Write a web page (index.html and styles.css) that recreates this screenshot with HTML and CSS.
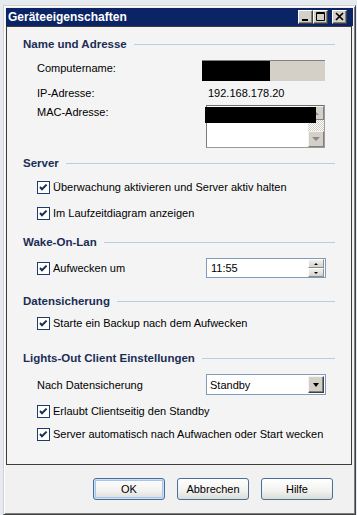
FILE: index.html
```html
<!DOCTYPE html>
<html lang="de">
<head>
    <meta charset="UTF-8">
    <meta name="viewport" content="width=device-width, initial-scale=1.0">
    <title>Geräteeigenschaften</title>
    <link rel="stylesheet" href="styles.css">
</head>
<body>
    <div class="window">
        <div class="titlebar">
            <span class="title">Geräteeigenschaften</span>
            <div class="caption">
                <span class="cap-btn"><svg width="13" height="12" viewBox="0 0 13 12"><rect x="3" y="8" width="6" height="2" fill="#000"/></svg></span>
                <span class="cap-btn"><svg width="13" height="12" viewBox="0 0 13 12"><path d="M2.5 1.5h8v8h-8z" fill="none" stroke="#000"/><rect x="2" y="2" width="9" height="1" fill="#000"/></svg></span>
                <span class="cap-btn cap-close"><svg width="13" height="12" viewBox="0 0 13 12"><path d="M3 2l7 7M10 2l-7 7" stroke="#000" stroke-width="1.7"/></svg></span>
            </div>
        </div>

        <div class="panel">
            <div class="heading mt-9">Name und Adresse</div>
            <div class="row row-name">
                <span class="label">Computername:</span>
                <div class="readonly"><span class="redact"></span></div>
            </div>
            <div class="row row-ip mt-5">
                <span class="label">IP-Adresse:</span>
                <span class="value">192.168.178.20</span>
            </div>
            <div class="row row-mac mt-5">
                <span class="label">MAC-Adresse:</span>
                <div class="listbox">
                    <div class="scrollbar">
                        <span class="sb-btn sb-up"></span>
                        <span class="sb-track"></span>
                        <span class="sb-btn sb-down"></span>
                    </div>
                    <span class="redact redact-mac"></span>
                </div>
            </div>

            <div class="heading mt-7">Server</div>
            <label class="row check mt-8">
                <svg class="box" width="13" height="13" viewBox="0 0 13 13"><rect x="0.5" y="0.5" width="12" height="12" fill="#fff" stroke="#1d3b6b"/><path d="M3 6l2 2.2 4.6-4.6" fill="none" stroke="#1b2f55" stroke-width="2"/></svg>
                Überwachung aktivieren und Server aktiv halten
            </label>
            <label class="row check mt-10">
                <svg class="box" width="13" height="13" viewBox="0 0 13 13"><rect x="0.5" y="0.5" width="12" height="12" fill="#fff" stroke="#1d3b6b"/><path d="M3 6l2 2.2 4.6-4.6" fill="none" stroke="#1b2f55" stroke-width="2"/></svg>
                Im Laufzeitdiagram anzeigen
            </label>

            <div class="heading mt-13">Wake-On-Lan</div>
            <div class="row row-wake mt-8">
                <label class="check label">
                    <svg class="box" width="13" height="13" viewBox="0 0 13 13"><rect x="0.5" y="0.5" width="12" height="12" fill="#fff" stroke="#1d3b6b"/><path d="M3 6l2 2.2 4.6-4.6" fill="none" stroke="#1b2f55" stroke-width="2"/></svg>
                    Aufwecken um
                </label>
                <div class="field spin-field">
                    <span class="field-text">11:55</span>
                    <div class="spinner">
                        <span class="spin-btn spin-up"></span>
                        <span class="spin-btn spin-down"></span>
                    </div>
                </div>
            </div>

            <div class="heading mt-15">Datensicherung</div>
            <label class="row check mt-6">
                <svg class="box" width="13" height="13" viewBox="0 0 13 13"><rect x="0.5" y="0.5" width="12" height="12" fill="#fff" stroke="#1d3b6b"/><path d="M3 6l2 2.2 4.6-4.6" fill="none" stroke="#1b2f55" stroke-width="2"/></svg>
                Starte ein Backup nach dem Aufwecken
            </label>

            <div class="heading mt-19">Lights-Out Client Einstellungen</div>
            <div class="row row-combo mt-8">
                <span class="label">Nach Datensicherung</span>
                <div class="field combo">
                    <span class="field-text">Standby</span>
                    <span class="drop-btn"></span>
                </div>
            </div>
            <label class="row check mt-8">
                <svg class="box" width="13" height="13" viewBox="0 0 13 13"><rect x="0.5" y="0.5" width="12" height="12" fill="#fff" stroke="#1d3b6b"/><path d="M3 6l2 2.2 4.6-4.6" fill="none" stroke="#1b2f55" stroke-width="2"/></svg>
                Erlaubt Clientseitig den Standby
            </label>
            <label class="row check mt-7">
                <svg class="box" width="13" height="13" viewBox="0 0 13 13"><rect x="0.5" y="0.5" width="12" height="12" fill="#fff" stroke="#1d3b6b"/><path d="M3 6l2 2.2 4.6-4.6" fill="none" stroke="#1b2f55" stroke-width="2"/></svg>
                Server automatisch nach Aufwachen oder Start wecken
            </label>
        </div>

        <div class="actions">
            <button class="btn btn-default">OK</button>
            <button class="btn">Abbrechen</button>
            <button class="btn">Hilfe</button>
        </div>
    </div>
</body>
</html>
```

FILE: styles.css
```css
body {
    margin: 0;
    background: #e6ebf1;
    font-family: "Liberation Sans", Arial, sans-serif;
    font-size: 11px;
    color: #000;
}
.window {
    box-sizing: border-box;
    width: 353px;
    height: 510px;
    margin: 5px 0 0 3px;
    padding: 2px;
    border: 1px solid;
    border-color: #d4d0c8 #404040 #404040 #d4d0c8;
    box-shadow: inset 1px 1px #fff, inset -1px -1px #808080;
    background: #f1f1f1;
    display: flex;
    flex-direction: column;
}

/* title bar */
.titlebar {
    flex: none;
    height: 18px;
    display: flex;
    align-items: center;
    padding: 0 6px 0 2px;
    background: #0b2466;
    color: #fff;
    font-weight: bold;
    font-size: 12px;
}
.caption {
    margin-left: auto;
    display: flex;
}
.cap-btn {
    box-sizing: border-box;
    width: 15px;
    height: 14px;
    display: flex;
    background: #d4d0c8;
    border: 1px solid;
    border-color: #fff #404040 #404040 #fff;
    box-shadow: inset -1px -1px #808080;
}
.cap-close {
    margin-left: 4px;
}

/* main panel */
.panel {
    flex: none;
    box-sizing: border-box;
    height: 439px;
    margin-right: 1px;
    padding: 0 16px;
    border: 1px solid #3c3c3c;
    background: #f4f4f4;
}
.heading {
    display: flex;
    align-items: center;
    height: 16px;
    font-weight: bold;
    font-size: 11.5px;
    color: #1b2d55;
}
.heading::after {
    content: "";
    flex: 1;
    height: 1px;
    margin-left: 7px;
    background: #b9cee4;
}
.row {
    display: flex;
    align-items: center;
    padding-left: 14px;
    line-height: 14px;
}
.label {
    width: 169px;
    flex: none;
}
.check {
    height: 16px;
    display: flex;
    align-items: center;
    gap: 3px;
}
.box {
    flex: none;
}

.row-name {
    height: 21px;
    margin-top: 8px;
    align-items: flex-start;
}
.row-name .label {
    margin-top: 1px;
}
.readonly {
    box-sizing: border-box;
    width: 123px;
    height: 21px;
    margin-left: -4px;
    border-top: 1px solid #808080;
    background: #d4d0c8;
}
.redact {
    display: block;
    width: 68px;
    height: 20px;
    background: #000;
}
.row-ip {
    height: 14px;
}
.value {
    margin-left: 2px;
}
.row-mac {
    align-items: flex-start;
}
.listbox {
    position: relative;
    box-sizing: border-box;
    width: 119px;
    height: 43px;
    display: flex;
    justify-content: flex-end;
    border: 1px solid #9b9b9b;
    border-top-color: #6e6e6e;
    border-left-color: #7c7c7c;
    background: #fff;
}
.redact-mac {
    position: absolute;
    left: -2px;
    top: 1px;
    width: 111px;
    height: 16px;
}
.scrollbar {
    width: 16px;
    display: flex;
    flex-direction: column;
}
.sb-btn {
    box-sizing: border-box;
    display: flex;
    align-items: center;
    justify-content: center;
    background: #d4d0c8;
    border: 1px solid;
    border-color: #f4f3ee #808080 #808080 #f4f3ee;
}
.sb-up {
    height: 14px;
}
.sb-down {
    height: 16px;
}
.sb-track {
    flex: 1;
    background: repeating-conic-gradient(#fff 0 25%, #cfccc4 0 50%) 0 0 / 2px 2px;
}
.sb-up::after {
    content: "";
    border-left: 3px solid transparent;
    border-right: 3px solid transparent;
    border-bottom: 3px solid #8a8a8a;
}
.sb-down::after {
    content: "";
    border-left: 4px solid transparent;
    border-right: 4px solid transparent;
    border-top: 4px solid #8a8a8a;
}

/* edit fields */
.field {
    box-sizing: border-box;
    width: 120px;
    display: flex;
    align-items: center;
    border: 1px solid #7f9db9;
    background: #fff;
}
.field-text {
    flex: 1;
}
.row-wake {
    height: 20px;
}
.spin-field {
    height: 20px;
    padding: 0 1px 0 4px;
}
.spinner {
    display: flex;
    flex-direction: column;
    width: 16px;
}
.spin-btn {
    box-sizing: border-box;
    height: 9px;
    display: flex;
    align-items: center;
    justify-content: center;
    background: linear-gradient(#f2f1ec, #d6d3cb);
    border: 1px solid;
    border-color: #fff #8d8d8d #8d8d8d #fff;
}
.spin-up::after {
    content: "";
    border-left: 2px solid transparent;
    border-right: 2px solid transparent;
    border-bottom: 2px solid #000;
}
.spin-down::after {
    content: "";
    border-left: 2px solid transparent;
    border-right: 2px solid transparent;
    border-top: 2px solid #000;
}
.row-combo {
    height: 21px;
}
.combo {
    height: 21px;
    padding: 0 1px 0 3px;
}
.drop-btn {
    box-sizing: border-box;
    width: 16px;
    height: 17px;
    display: flex;
    align-items: center;
    justify-content: center;
    background: #d4d0c8;
    border: 1px solid;
    border-color: #f4f3ee #404040 #404040 #f4f3ee;
    box-shadow: inset -1px -1px #808080;
}
.drop-btn::after {
    content: "";
    border-left: 3.5px solid transparent;
    border-right: 3.5px solid transparent;
    border-top: 4px solid #000;
}

/* spacing */
.mt-5 { margin-top: 5px; }
.mt-6 { margin-top: 6px; }
.mt-7 { margin-top: 7px; }
.mt-8 { margin-top: 8px; }
.mt-9 { margin-top: 9px; }
.mt-10 { margin-top: 10px; }
.mt-13 { margin-top: 13px; }
.mt-15 { margin-top: 15px; }
.mt-19 { margin-top: 19px; }

/* dialog buttons */
.actions {
    display: flex;
    justify-content: flex-end;
    gap: 12px;
    padding: 13px 20px 0 0;
}
.btn {
    box-sizing: border-box;
    width: 72px;
    height: 22px;
    padding: 0;
    border: 1px solid #4b6e97;
    border-radius: 3px;
    background: linear-gradient(#ffffff, #f1f1ef 60%, #dcdcd8);
    font-family: inherit;
    font-size: 11px;
    color: #000;
}
.btn-default {
    box-shadow: inset 0 0 0 1px #cfe1f6, inset 0 0 0 2px #a7c6ec;
}
```
